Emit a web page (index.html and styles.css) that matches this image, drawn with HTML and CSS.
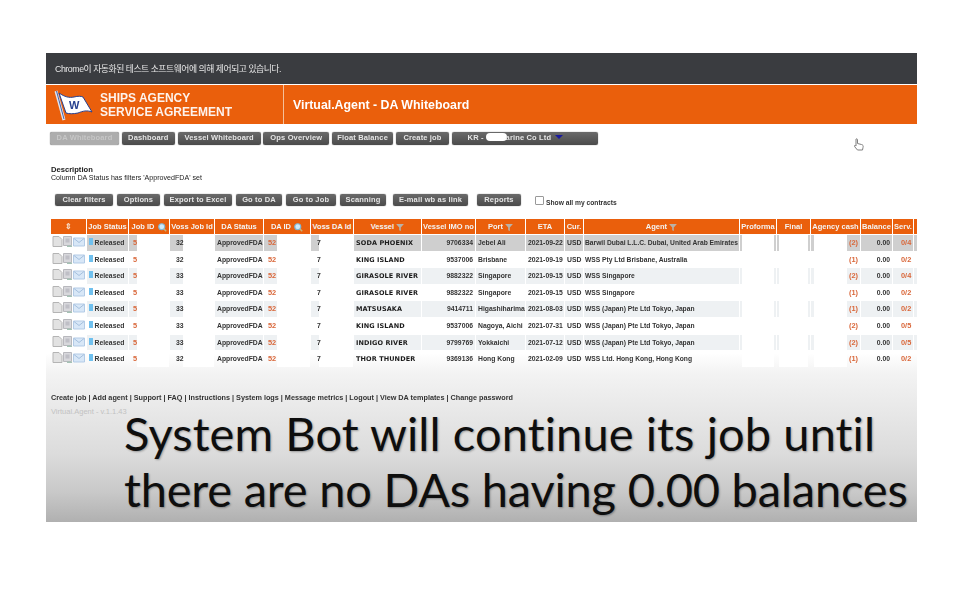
FILE: index.html
```html
<!DOCTYPE html>
<html>
<head>
  <meta charset="utf-8">
  <title>Virtual.Agent - DA Whiteboard</title>
  <link rel="stylesheet" href="styles.css">
</head>
<body>
<svg class="defs" width="0" height="0">
  <symbol id="row-icons" viewBox="0 0 33 12">
    <path d="M1 1h6l3 3v7H1z" fill="#e2e2e2" stroke="#b4b4b4"/>
    <path d="M11.500 1h8v9h-8z" fill="#d8d8dc" stroke="#b8b8bd"/>
    <path d="M13.500 3h4v4h-4z" fill="#bfbfc6"/>
    <path d="M15 10h5v1.500h-5z" fill="#a5c2b4"/>
    <path d="M21.500 2.500h11v8h-11z" fill="#d8e7f7" stroke="#b3cbe6"/>
    <path d="M22 3l5 4 5-4" fill="none" stroke="#a5c0de"/>
  </symbol>
  <symbol id="funnel" viewBox="0 0 10 9">
    <path d="M0 0h10L6 4.500V9L4 8V4.500z" fill="#b9b2a8"/>
  </symbol>
  <symbol id="lens" viewBox="0 0 12 12">
    <circle cx="5" cy="5" r="4" fill="#cfeaf8" stroke="#7db7d8" stroke-width="1.500"/>
    <path d="M8 8l3 3" stroke="#c9b27a" stroke-width="2"/>
  </symbol>
</svg>

<div class="frame">
  <div class="chrome-bar">Chrome이 자동화된 테스트 소프트웨어에 의해 제어되고 있습니다.</div>

  <div class="brand">
    <div class="brand-left">
      <svg class="flag" width="40" height="32" viewBox="0 0 40 32">
        <path d="M2 2l8 29" stroke="#dfe6f2" stroke-width="3"/>
        <path d="M2.500 2l7.500 28" stroke="#4a63a8" stroke-width="1"/>
        <path d="M5 4c6 4 10 5 15 4 4-1 7-1 9 0l9 15c-5-2-9-1-14 1-5 1-9 1-12 0z" fill="#fff" stroke="#27408f" stroke-width="1"/>
        <text x="15" y="20" class="flag-w">W</text>
      </svg>
      <div class="brand-name">SHIPS AGENCY<br>SERVICE AGREEMENT</div>
    </div>
    <div class="brand-title">Virtual.Agent - DA Whiteboard</div>
  </div>

  <div class="nav">
    <a class="btn off">DA Whiteboard</a>
    <a class="btn">Dashboard</a>
    <a class="btn">Vessel Whiteboard</a>
    <a class="btn">Ops Overview</a>
    <a class="btn">Float Balance</a>
    <a class="btn">Create job</a>
    <a class="btn contract">KR -<span class="blot"></span>arine Co Ltd<span class="caret"></span></a>
  </div>

  <div class="desc"><b>Description</b><br>Column DA Status has filters 'ApprovedFDA' set</div>

  <div class="tools">
    <a class="btn">Clear filters</a>
    <a class="btn">Options</a>
    <a class="btn">Export to Excel</a>
    <a class="btn">Go to DA</a>
    <a class="btn">Go to Job</a>
    <a class="btn">Scanning</a>
    <a class="btn mail">E-mail wb as link</a>
    <a class="btn reports">Reports</a>
    <label class="all"><span class="box"></span>Show all my contracts</label>
  </div>

  <div class="wb">
    <div class="row head">
      <div class="th"><span class="sort">⇕</span></div>
      <div class="th">Job Status</div>
      <div class="th">Job ID <svg class="ico12"><use href="#lens"/></svg></div>
      <div class="th">Voss Job Id</div>
      <div class="th">DA Status</div>
      <div class="th">DA ID <svg class="ico12"><use href="#lens"/></svg></div>
      <div class="th">Voss DA Id</div>
      <div class="th">Vessel <svg class="ico9"><use href="#funnel"/></svg></div>
      <div class="th">Vessel IMO no</div>
      <div class="th">Port <svg class="ico9"><use href="#funnel"/></svg></div>
      <div class="th">ETA</div>
      <div class="th">Cur.</div>
      <div class="th">Agent <svg class="ico9"><use href="#funnel"/></svg></div>
      <div class="th">Proforma</div>
      <div class="th">Final</div>
      <div class="th">Agency cash</div>
      <div class="th">Balance</div>
      <div class="th">Serv.</div>
      <div class="th"></div>
    </div>

    <div class="row sel">
      <div class="td icons"><svg class="row-ico"><use href="#row-icons"/></svg></div>
      <div class="td"><i class="stat"></i>Released</div>
      <div class="td num cut-a">5</div>
      <div class="td mid cut-b">32</div>
      <div class="td">ApprovedFDA</div>
      <div class="td num cut-c">52</div>
      <div class="td mid cut-a">7</div>
      <div class="td ship">SODA PHOENIX</div>
      <div class="td imo">9706334</div>
      <div class="td">Jebel Ali</div>
      <div class="td">2021-09-22</div>
      <div class="td">USD</div>
      <div class="td agent">Barwil Dubai L.L.C. Dubai, United Arab Emirates</div>
      <div class="td inset"></div>
      <div class="td inset"></div>
      <div class="td cash">(2)</div>
      <div class="td bal">0.00</div>
      <div class="td num serv">0/4</div>
      <div class="td"></div>
    </div>
    <div class="row">
      <div class="td icons"><svg class="row-ico"><use href="#row-icons"/></svg></div>
      <div class="td"><i class="stat"></i>Released</div>
      <div class="td num cut-a">5</div>
      <div class="td mid cut-b">32</div>
      <div class="td">ApprovedFDA</div>
      <div class="td num cut-c">52</div>
      <div class="td mid cut-a">7</div>
      <div class="td ship">KING ISLAND</div>
      <div class="td imo">9537006</div>
      <div class="td">Brisbane</div>
      <div class="td">2021-09-19</div>
      <div class="td">USD</div>
      <div class="td agent">WSS Pty Ltd Brisbane, Australia</div>
      <div class="td inset"></div>
      <div class="td inset"></div>
      <div class="td cash">(1)</div>
      <div class="td bal">0.00</div>
      <div class="td num serv">0/2</div>
      <div class="td"></div>
    </div>
    <div class="row alt">
      <div class="td icons"><svg class="row-ico"><use href="#row-icons"/></svg></div>
      <div class="td"><i class="stat"></i>Released</div>
      <div class="td num cut-a">5</div>
      <div class="td mid cut-b">33</div>
      <div class="td">ApprovedFDA</div>
      <div class="td num cut-c">52</div>
      <div class="td mid cut-a">7</div>
      <div class="td ship">GIRASOLE RIVER</div>
      <div class="td imo">9882322</div>
      <div class="td">Singapore</div>
      <div class="td">2021-09-15</div>
      <div class="td">USD</div>
      <div class="td agent">WSS Singapore</div>
      <div class="td inset"></div>
      <div class="td inset"></div>
      <div class="td cash">(2)</div>
      <div class="td bal">0.00</div>
      <div class="td num serv">0/4</div>
      <div class="td"></div>
    </div>
    <div class="row">
      <div class="td icons"><svg class="row-ico"><use href="#row-icons"/></svg></div>
      <div class="td"><i class="stat"></i>Released</div>
      <div class="td num cut-a">5</div>
      <div class="td mid cut-b">33</div>
      <div class="td">ApprovedFDA</div>
      <div class="td num cut-c">52</div>
      <div class="td mid cut-a">7</div>
      <div class="td ship">GIRASOLE RIVER</div>
      <div class="td imo">9882322</div>
      <div class="td">Singapore</div>
      <div class="td">2021-09-15</div>
      <div class="td">USD</div>
      <div class="td agent">WSS Singapore</div>
      <div class="td inset"></div>
      <div class="td inset"></div>
      <div class="td cash">(1)</div>
      <div class="td bal">0.00</div>
      <div class="td num serv">0/2</div>
      <div class="td"></div>
    </div>
    <div class="row alt">
      <div class="td icons"><svg class="row-ico"><use href="#row-icons"/></svg></div>
      <div class="td"><i class="stat"></i>Released</div>
      <div class="td num cut-a">5</div>
      <div class="td mid cut-b">33</div>
      <div class="td">ApprovedFDA</div>
      <div class="td num cut-c">52</div>
      <div class="td mid cut-a">7</div>
      <div class="td ship">MATSUSAKA</div>
      <div class="td imo">9414711</div>
      <div class="td">Higashiharima</div>
      <div class="td">2021-08-03</div>
      <div class="td">USD</div>
      <div class="td agent">WSS (Japan) Pte Ltd Tokyo, Japan</div>
      <div class="td inset"></div>
      <div class="td inset"></div>
      <div class="td cash">(1)</div>
      <div class="td bal">0.00</div>
      <div class="td num serv">0/2</div>
      <div class="td"></div>
    </div>
    <div class="row">
      <div class="td icons"><svg class="row-ico"><use href="#row-icons"/></svg></div>
      <div class="td"><i class="stat"></i>Released</div>
      <div class="td num cut-a">5</div>
      <div class="td mid cut-b">33</div>
      <div class="td">ApprovedFDA</div>
      <div class="td num cut-c">52</div>
      <div class="td mid cut-a">7</div>
      <div class="td ship">KING ISLAND</div>
      <div class="td imo">9537006</div>
      <div class="td">Nagoya, Aichi</div>
      <div class="td">2021-07-31</div>
      <div class="td">USD</div>
      <div class="td agent">WSS (Japan) Pte Ltd Tokyo, Japan</div>
      <div class="td inset"></div>
      <div class="td inset"></div>
      <div class="td cash">(2)</div>
      <div class="td bal">0.00</div>
      <div class="td num serv">0/5</div>
      <div class="td"></div>
    </div>
    <div class="row alt">
      <div class="td icons"><svg class="row-ico"><use href="#row-icons"/></svg></div>
      <div class="td"><i class="stat"></i>Released</div>
      <div class="td num cut-a">5</div>
      <div class="td mid cut-b">33</div>
      <div class="td">ApprovedFDA</div>
      <div class="td num cut-c">52</div>
      <div class="td mid cut-a">7</div>
      <div class="td ship">INDIGO RIVER</div>
      <div class="td imo">9799769</div>
      <div class="td">Yokkaichi</div>
      <div class="td">2021-07-12</div>
      <div class="td">USD</div>
      <div class="td agent">WSS (Japan) Pte Ltd Tokyo, Japan</div>
      <div class="td inset"></div>
      <div class="td inset"></div>
      <div class="td cash">(2)</div>
      <div class="td bal">0.00</div>
      <div class="td num serv">0/5</div>
      <div class="td"></div>
    </div>
    <div class="row">
      <div class="td icons"><svg class="row-ico"><use href="#row-icons"/></svg></div>
      <div class="td"><i class="stat"></i>Released</div>
      <div class="td num cut-a">5</div>
      <div class="td mid cut-b">32</div>
      <div class="td">ApprovedFDA</div>
      <div class="td num cut-c">52</div>
      <div class="td mid cut-a">7</div>
      <div class="td ship">THOR THUNDER</div>
      <div class="td imo">9369136</div>
      <div class="td">Hong Kong</div>
      <div class="td">2021-02-09</div>
      <div class="td">USD</div>
      <div class="td agent">WSS Ltd. Hong Kong, Hong Kong</div>
      <div class="td inset"></div>
      <div class="td inset"></div>
      <div class="td cash">(1)</div>
      <div class="td bal">0.00</div>
      <div class="td num serv">0/2</div>
      <div class="td"></div>
    </div>
  </div>

  <div class="links">Create job | Add agent | Support | FAQ | Instructions | System logs | Message metrics | Logout | View DA templates | Change password</div>
  <div class="version">Virtual.Agent - v.1.1.43</div>

  <div class="caption"><span class="first">System Bot will continue its job until</span><br><span class="second">there are no DAs having 0.00 balances</span></div>
</div>

<svg class="cursor" width="12" height="14" viewBox="0 0 12 14">
  <path d="M3 1c1-.5 1.500 0 1.500 1v3.500l4 1c1.500.5 2 1 1.500 3l-.5 2.500H4.500L1.500 8.500c-.5-1 .5-1.500 1.500-.5z" fill="#fff" stroke="#555" stroke-width="1"/>
</svg>
</body>
</html>
```

FILE: styles.css
```css
body {
    margin: 0;
    background: #fff;
    font-family: "Liberation Sans", Arial, sans-serif;
    color: #333;
}

.defs {
    position: absolute;
}

.frame {
    position: relative;
    width: 871px;
    height: 469px;
    margin: 53px 0 0 46px;
    overflow: hidden;
    background: linear-gradient(to bottom, #fff 0, #fff 300px, #f3f3f3 320px, #dcdcdc 400px, #c8c8c8 440px, #b0b0b0 469px);
}

.chrome-bar {
    height: 31px;
    padding-left: 9px;
    background: #3a3c40;
    color: #e8e8e8;
    font: 8.800px/33px "Liberation Sans", "Noto Sans CJK KR", sans-serif;
    letter-spacing: -.45px;
    filter: blur(.3px);
}

.brand {
    display: flex;
    height: 39px;
    margin-top: 1px;
    background: #ea5f0c;
    color: #fff;
    font-weight: bold;
    filter: blur(.35px);
}

.brand-left {
    display: flex;
    align-items: center;
    width: 237px;
    border-right: 1px solid #f5c09a;
}

.flag {
    margin-left: 8px;
}

.flag-w {
    font: bold 11px "Liberation Sans", sans-serif;
    fill: #27408f;
}

.brand-name {
    margin-left: 6px;
    font-size: 12px;
    line-height: 14px;
    opacity: .92;
}

.brand-title {
    margin-left: 9px;
    font-size: 12.350px;
    line-height: 40px;
}

.btn {
    display: block;
    overflow: hidden;
    border-radius: 2px;
    background: linear-gradient(to bottom, #6a6a6a, #4b4b4b);
    box-shadow: 0 0 1px #555;
    color: #e6e6e6;
    font-size: 7.500px;
    font-weight: bold;
    letter-spacing: .15px;
    line-height: 12.500px;
    text-align: center;
    white-space: nowrap;
}

.btn.off {
    background: #adadad;
    color: #c6c6c6;
}

.nav {
    display: grid;
    grid-template-columns: 69px 53.500px 83px 66px 61.500px 53px 146px;
    column-gap: 2.600px;
    height: 12.500px;
    margin: 8px 0 0 4px;
    filter: blur(.5px);
}

.contract {
    padding-left: 16px;
    text-align: left;
}

.blot {
    display: inline-block;
    width: 21px;
    height: 8px;
    margin: 0 -1px 0 2px;
    border-radius: 4px;
    background: #fff;
    vertical-align: -1px;
}

.caret {
    display: inline-block;
    margin-left: 4px;
    border-top: 4px solid #1a1a9c;
    border-left: 4px solid transparent;
    border-right: 4px solid transparent;
    vertical-align: 1px;
}

.desc {
    margin: 21.500px 0 0 5px;
    color: #222;
    font-size: 7.100px;
    line-height: 7.500px;
    filter: blur(.3px);
}

.desc b {
    font-size: 7.600px;
}

.tools {
    display: grid;
    grid-template-columns: 58px 43px 68px 46px 50px 46px 78px 49px auto;
    column-gap: 4px;
    align-items: center;
    height: 12px;
    margin: 12px 0 0 9px;
    filter: blur(.5px);
}

.tools .btn {
    line-height: 12px;
}

.tools .mail {
    margin-left: 3px;
}

.tools .reports {
    margin-left: 5px;
}

.all {
    display: flex;
    align-items: center;
    margin: 4px 0 0 10px;
    color: #333;
    font-size: 6.700px;
    font-weight: bold;
}

.box {
    width: 7px;
    height: 7px;
    margin: -3px 2px 0 0;
    border: 1px solid #999;
    border-radius: 1px;
    background: #fff;
}

.wb {
    display: grid;
    grid-template-columns: 35px 41px 40px 44px 48px 46px 42px 67px 53px 49px 38px 18px 155px 36px 33px 49px 31px 20px 3px;
    grid-template-rows: 15px repeat(8, 15.600px);
    gap: 1px;
    margin: 13px 0 0 5px;
    font-size: 6.800px;
    font-weight: bold;
    filter: blur(.45px);
}

.row {
    display: contents;
    --bg: transparent;
}

.row.alt {
    --bg: #eef1f3;
}

.row.sel {
    --bg: #cfcfcf;
}

.th {
    background: #ea5f0c;
    color: #f4f4f4;
    font-size: 7.500px;
    line-height: 15px;
    text-align: center;
    white-space: nowrap;
}

.th svg {
    vertical-align: middle;
}

.ico12 {
    width: 9px;
    height: 9px;
    margin-left: 1px;
}

.ico9 {
    width: 8px;
    height: 7px;
}

.sort {
    color: #f6d9c4;
    font-size: 8px;
}

.td {
    padding-left: 2px;
    overflow: hidden;
    background: var(--bg);
    color: #333;
    line-height: 15.600px;
    white-space: nowrap;
}

.td.icons {
    padding-left: 1px;
    background: transparent;
}

.row-ico {
    display: block;
    width: 33px;
    height: 13px;
}

.stat {
    display: inline-block;
    width: 3.500px;
    height: 7px;
    margin-right: 2px;
    background: #6fc0ee;
    vertical-align: 0;
}

.num, .cash {
    color: #d9673a;
    font-size: 7.400px;
}

.num {
    padding-left: 4px;
}

.td.serv {
    padding-left: 8px;
}

.mid {
    padding-left: 6px;
}

.cut-a {
    background: linear-gradient(to right, var(--bg) 8px, #fff 8px);
}

.cut-b {
    background: linear-gradient(to right, var(--bg) 13px, #fff 13px);
}

.cut-c {
    background: linear-gradient(to right, var(--bg) 13px, #fff 13px);
}

.ship {
    color: #1c1c1c;
    font-family: "DejaVu Sans", sans-serif;
    font-size: 6.500px;
    letter-spacing: .1px;
    line-height: 17px;
}

.agent {
    padding-left: 1px;
    font-size: 6.700px;
}

.imo, .bal {
    padding-right: 2px;
    padding-left: 0;
    text-align: right;
}

.inset {
    padding: 0;
    background: linear-gradient(to right, var(--bg) 2px, #fff 2px, #fff calc(100% - 2px), var(--bg) calc(100% - 2px));
}

.cash {
    padding-left: 38px;
    background: linear-gradient(to right, var(--bg) 3px, #fff 3px, #fff 36px, var(--bg) 36px);
}

.links {
    margin: 25px 0 0 5px;
    color: #333;
    font-size: 7.250px;
    font-weight: bold;
    line-height: 11px;
    filter: blur(.3px);
}

.version {
    margin: 4px 0 0 5px;
    color: #c2c2c2;
    font-size: 7.500px;
    line-height: 10px;
}

.caption {
    position: absolute;
    top: 352px;
    left: 78px;
    color: #0e0e0e;
    font-family: Lato, sans-serif;
    font-size: 47px;
    font-variant-ligatures: none;
    line-height: 56px;
    white-space: nowrap;
    text-shadow: 1px 1px 2px rgba(0, 0, 0, .3);
}

.first {
    letter-spacing: .1px;
}

.second {
    letter-spacing: -.2px;
}

.cursor {
    position: absolute;
    top: 138px;
    left: 853px;
    opacity: .75;
}
```
